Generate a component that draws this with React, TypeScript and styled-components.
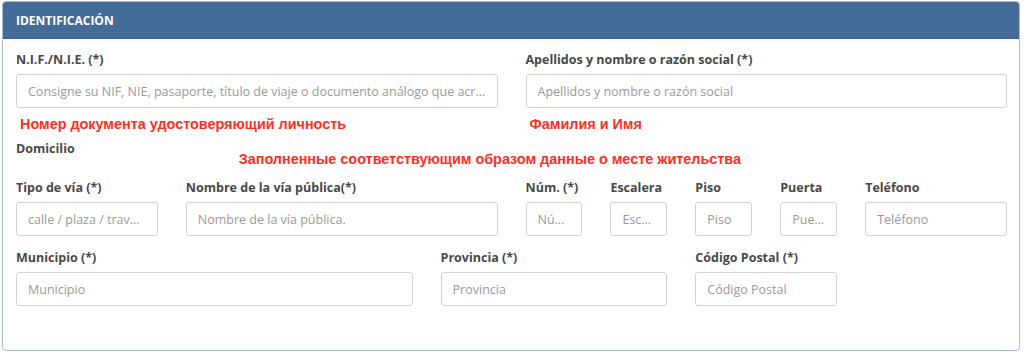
import React from 'react'
import styled, { createGlobalStyle } from 'styled-components'

const GlobalStyle = createGlobalStyle`
    html, body {
        margin: 0;
        padding: 0;
        background: #fff;
        font-family: 'Open Sans', 'Liberation Sans', sans-serif;
    }
`

const Page = styled.div`
    padding: 1px 4px 0 2px;
`

const Panel = styled.section`
    border: 1px solid #a9bed8;
    border-radius: 4px;
    overflow: hidden;
    background: #fff;
`

const PanelHeader = styled.div`
    height: 36px;
    display: flex;
    align-items: center;
    padding: 0 13px;
    background: #446c98;
    border-bottom: 1px solid #3a5f88;
`

const PanelTitle = styled.h2`
    margin: 0;
    font-size: 12px;
    font-weight: 700;
    color: #fff;
`

const PanelBody = styled.div`
    padding: 13px 12px 44px 13px;
    display: flex;
    flex-direction: column;
`

const Row = styled.div<{ $top?: number }>`
    display: grid;
    grid-template-columns: repeat(12, 1fr);
    column-gap: 28px;
    margin-top: ${p => p.$top ?? 0}px;
`

const Field = styled.div<{ $start: number; $span: number }>`
    grid-column: ${p => p.$start} / span ${p => p.$span};
    display: flex;
    flex-direction: column;
    min-width: 0;
`

const Label = styled.label`
    font-size: 12.5px;
    line-height: 16px;
    font-weight: 700;
    color: #484848;
    margin-bottom: 6px;
    white-space: nowrap;
`

const Input = styled.input`
    box-sizing: border-box;
    height: 34px;
    width: 100%;
    padding: 0 11px;
    border: 1px solid #d3d3d3;
    border-radius: 3px;
    font-family: 'Open Sans', 'Liberation Sans', sans-serif;
    font-size: 12.5px;
    color: #555;
    text-overflow: ellipsis;
    outline: none;
    &::placeholder {
        color: #9a9a9a;
    }
`

const Hint = styled.div`
    margin-top: 7px;
    padding-left: 4px;
    font-family: 'Liberation Sans', Arial, sans-serif;
    font-size: 14.4px;
    line-height: 18px;
    font-weight: 700;
    color: #ff2e1f;
    white-space: nowrap;
`

const SectionRow = styled.div`
    display: flex;
    align-items: flex-start;
    margin-top: 8px;
`

const SectionTitle = styled.div`
    font-size: 12.5px;
    line-height: 16px;
    font-weight: 700;
    color: #484848;
`

const SectionHint = styled(Hint)`
    margin-top: 9px;
    margin-left: 164px;
    padding-left: 0;
`

type FieldDef = { label: string; placeholder: string; start: number; span: number }

const streetFields: FieldDef[] = [
    { label: 'Tipo de vía (*)', placeholder: 'calle / plaza / travesía', start: 1, span: 2 },
    { label: 'Nombre de la vía pública(*)', placeholder: 'Nombre de la vía pública.', start: 3, span: 4 },
    { label: 'Núm. (*)', placeholder: 'Número', start: 7, span: 1 },
    { label: 'Escalera', placeholder: 'Escalera', start: 8, span: 1 },
    { label: 'Piso', placeholder: 'Piso', start: 9, span: 1 },
    { label: 'Puerta', placeholder: 'Puerta', start: 10, span: 1 },
    { label: 'Teléfono', placeholder: 'Teléfono', start: 11, span: 2 },
]

const placeFields: FieldDef[] = [
    { label: 'Municipio (*)', placeholder: 'Municipio', start: 1, span: 5 },
    { label: 'Provincia (*)', placeholder: 'Provincia', start: 6, span: 3 },
    { label: 'Código Postal (*)', placeholder: 'Código Postal', start: 9, span: 2 },
]

const renderField = (f: FieldDef) => (
    <Field key={f.label} $start={f.start} $span={f.span}>
        <Label>{f.label}</Label>
        <Input placeholder={f.placeholder} />
    </Field>
)

const App: React.FC = () => {
  return (
    <>
      <GlobalStyle />
      <Page>
        <Panel>
          <PanelHeader>
            <PanelTitle>IDENTIFICACIÓN</PanelTitle>
          </PanelHeader>
          <PanelBody>
            <Row>
              <Field $start={1} $span={6}>
                <Label>N.I.F./N.I.E. (*)</Label>
                <Input placeholder='Consigne su NIF, NIE, pasaporte, título de viaje o documento análogo que acredite su identidad' />
                <Hint>Номер документа удостоверяющий личность</Hint>
              </Field>
              <Field $start={7} $span={6}>
                <Label>Apellidos y nombre o razón social (*)</Label>
                <Input placeholder='Apellidos y nombre o razón social' />
                <Hint>Фамилия и Имя</Hint>
              </Field>
            </Row>
            <SectionRow>
              <SectionTitle>Domicilio</SectionTitle>
              <SectionHint>Заполненные соответствующим образом данные о месте жительства</SectionHint>
            </SectionRow>
            <Row $top={12}>
              {streetFields.map(renderField)}
            </Row>
            <Row $top={14}>
              {placeFields.map(renderField)}
            </Row>
          </PanelBody>
        </Panel>
      </Page>
    </>
  )
}

export default App
